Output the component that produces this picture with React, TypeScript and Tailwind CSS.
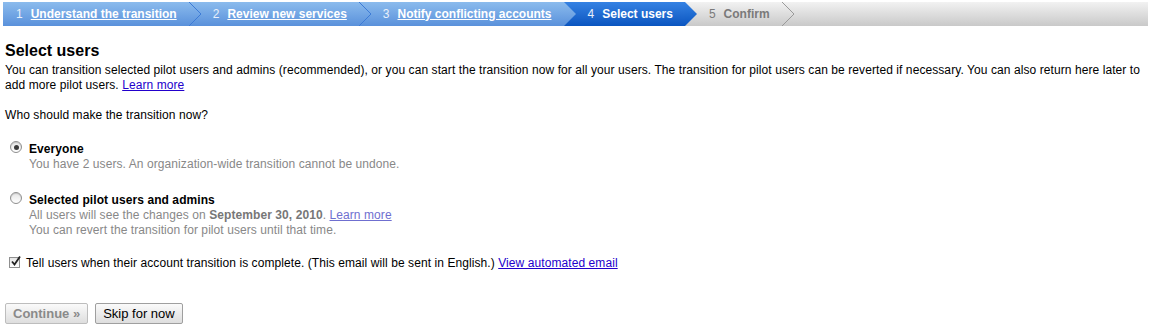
import React from "react";

type Step = { n: number; label: string; state: "done" | "current" | "todo" };

const steps: Step[] = [
  { n: 1, label: "Understand the transition", state: "done" },
  { n: 2, label: "Review new services", state: "done" },
  { n: 3, label: "Notify conflicting accounts", state: "done" },
  { n: 4, label: "Select users", state: "current" },
  { n: 5, label: "Confirm", state: "todo" },
];

const bgFor = {
  done: "bg-linear-to-b from-[#8bbbed] to-[#5a91db]",
  current: "bg-linear-to-b from-[#3582e3] to-[#0a55c0]",
  todo: "bg-linear-to-b from-[#f2f2f2] to-[#c9c9c9]",
};

const stops = {
  done: ["#8bbbed", "#5a91db"],
  current: ["#3582e3", "#0a55c0"],
  todo: ["#f2f2f2", "#c9c9c9"],
};

// the arrow at the end of a step, drawn over the next step's background
function Chevron({ from, to, id }: { from: Step["state"]; to: Step["state"]; id: string }) {
  const same = from === to;
  return (
    <svg width="12" height="24" viewBox="0 0 12 24" className={`block shrink-0 ${bgFor[to]}`}>
      <defs>
        <linearGradient id={id} x1="0" y1="0" x2="0" y2="1">
          <stop offset="0" stopColor={stops[from][0]} />
          <stop offset="1" stopColor={stops[from][1]} />
        </linearGradient>
      </defs>
      {same ? (
        <polyline
          points="0,0 12,12 0,24"
          fill="none"
          stroke={from === "todo" ? "#9a9a9a" : "#3d7bd6"}
          strokeWidth="1"
        />
      ) : (
        <polygon points="0,0 12,12 0,24" fill={`url(#${id})`} />
      )}
    </svg>
  );
}

function StepBar() {
  return (
    <div className={`mx-[3px] mt-[2px] flex h-[24px] ${bgFor.todo}`}>
      {steps.map((s, i) => {
        const next = steps[i + 1]?.state ?? "todo";
        return (
          <div key={s.n} className="flex h-[24px]">
            <div
              className={`flex items-center ${bgFor[s.state]} ${i === 0 ? "pl-[13px]" : "pl-[12px]"} pr-[12px] text-[12px] ${
                s.state === "todo" ? "text-[#7a7a7a]" : "text-white"
              }`}
            >
              <span className={s.state === "todo" ? "" : "text-[#e8f0fb]"}>{s.n}</span>
              <span className={`ml-[8px] font-bold ${s.state === "done" ? "underline" : ""}`}>{s.label}</span>
            </div>
            <Chevron from={s.state} to={next} id={`chev-${s.n}`} />
          </div>
        );
      })}
    </div>
  );
}

function Radio({ checked }: { checked?: boolean }) {
  return (
    <span className="flex h-[12px] w-[12px] shrink-0 items-center justify-center rounded-full border border-[#8f8f8f] bg-linear-to-b from-[#e6e6e6] to-[#ffffff] shadow-[inset_0_1px_1px_rgba(0,0,0,0.15)]">
      {checked && <span className="h-[5px] w-[5px] rounded-full bg-[#3b3b3b]" />}
    </span>
  );
}

function Checkbox() {
  return (
    <span className="relative flex h-[11px] w-[11px] shrink-0 items-center justify-center border border-[#8f8f8f] bg-linear-to-b from-[#e6e6e6] to-white">
      <svg width="12" height="12" viewBox="0 0 12 12" className="absolute -top-[3px] left-[0px]">
        <path d="M2 6.5 L4.5 9.5 L10 1.5" fill="none" stroke="#222" strokeWidth="1.8" />
      </svg>
    </span>
  );
}

export default function App() {
  return (
    <div className="min-h-[331px] bg-white font-['Liberation_Sans',Arial,sans-serif] text-[12px] leading-[15px] text-black">
      <StepBar />

      <div className="px-[5px] tracking-[0.08px]">
        <h1 className="mt-[16px] text-[16px] leading-[18px] font-bold tracking-normal">Select users</h1>
        <p className="mt-[3px]">
          You can transition selected pilot users and admins (recommended), or you can start the transition now for all
          your users. The transition for pilot users can be reverted if necessary. You can also return here later to add
          more pilot users.{" "}
          <a href="#" className="text-[#2200cc] underline">
            Learn more
          </a>
        </p>
        <p className="mt-[15px]">Who should make the transition now?</p>

        <div className="mt-[18px] ml-[5px] flex flex-col gap-[20px]">
          <div className="flex gap-[7px]">
            <div>
              <Radio checked />
            </div>
            <div className="mt-[1px]">
              <div className="font-bold">Everyone</div>
              <div className="text-[#888]">You have 2 users. An organization-wide transition cannot be undone.</div>
            </div>
          </div>

          <div className="flex gap-[7px]">
            <div>
              <Radio />
            </div>
            <div className="mt-[1px]">
              <div className="font-bold">Selected pilot users and admins</div>
              <div className="text-[#888]">
                All users will see the changes on <b className="text-[#777]">September 30, 2010</b>.{" "}
                <a href="#" className="text-[#6f6fd0] underline">
                  Learn more
                </a>
              </div>
              <div className="text-[#888]">You can revert the transition for pilot users until that time.</div>
            </div>
          </div>
        </div>

        <div className="mt-[19px] ml-[4px] flex items-start gap-[6px]">
          <Checkbox />
          <div className="mt-[-1px]">
            Tell users when their account transition is complete. (This email will be sent in English.){" "}
            <a href="#" className="text-[#2200cc] underline">
              View automated email
            </a>
          </div>
        </div>

        <div className="mt-[32px] flex gap-[7px] tracking-normal">
          <button
            disabled
            className="h-[21px] rounded-[2px] border border-[#bdbdbd] bg-linear-to-b from-[#fafafa] to-[#dedede] px-[7px] text-[13px] font-bold text-[#8a8a8a]"
          >
            Continue »
          </button>
          <button className="h-[21px] rounded-[2px] border border-[#9f9f9f] bg-linear-to-b from-[#fafafa] to-[#dedede] px-[7px] text-[13px] text-black">
            Skip for now
          </button>
        </div>
      </div>
    </div>
  );
}
